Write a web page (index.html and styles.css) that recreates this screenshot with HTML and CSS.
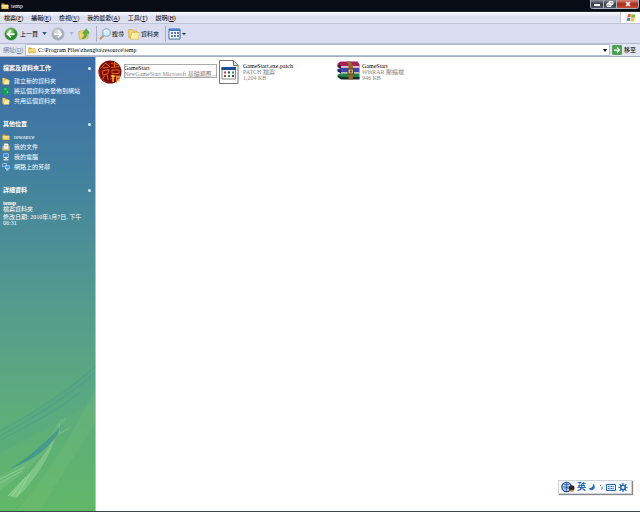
FILE: index.html
```
<!DOCTYPE html>
<html lang="zh-Hant">
<head>
<meta charset="utf-8">
<title>temp</title>
<link rel="stylesheet" href="styles.css">
</head>
<body>
<svg class="defs" aria-hidden="true">
  <defs>
    <linearGradient id="gFolder" x2="0" y2="1"><stop offset="0" stop-color="#fff3a8"/><stop offset="1" stop-color="#e8bd4a"/></linearGradient>
    <radialGradient id="gGreen" cx=".4" cy=".3"><stop offset="0" stop-color="#a5e08d"/><stop offset="1" stop-color="#258a27"/></radialGradient>
    <radialGradient id="gGray" cx=".4" cy=".3"><stop offset="0" stop-color="#e0e3ec"/><stop offset="1" stop-color="#a4a9b8"/></radialGradient>
  </defs>
  <symbol id="folder" viewBox="0 0 16 16"><path d="M1 3h5l2 2h6v9H1z" fill="#d9a93a"/><path d="M1 6h14v8H2z" fill="url(#gFolder)" stroke="#b98a28" stroke-width=".6"/></symbol>
  <symbol id="folders" viewBox="0 0 16 16"><path d="M1 2h5l1 2h5v9H1z" fill="#f5d46b" stroke="#c99a30" stroke-width=".7"/><path d="M5 6h10l-1 9H3z" fill="#fff0a8" stroke="#cfa43a" stroke-width=".7"/></symbol>
  <symbol id="globe" viewBox="0 0 16 16"><circle cx="8" cy="8" r="8" fill="#149a58"/><path d="M4 4l5 0M9 8l3 2-2 3" stroke="#5fe0b8" stroke-width="2" fill="none"/></symbol>
  <symbol id="pc" viewBox="0 0 16 16"><path d="M3 1h10v9H3z" fill="#e5f2ff"/><path d="M4 2h8v6H4z" fill="#3b8ceb"/><path d="M6 10h4v2h3v3H3v-3h3z" fill="#c4dbe6"/></symbol>
  <symbol id="net" viewBox="0 0 16 16"><path d="M1 1h9v7H1z" fill="#e5f2ff"/><path d="M2 2h7v5H2z" fill="#2f7fd8"/><path d="M6 5h9v7H6z" fill="#e5f2ff"/><path d="M7 6h7v5H7z" fill="#3b9ceb"/><path d="M8 12h5v3H8z" fill="#9fd0d8"/></symbol>
</svg>
<div class="window">
  <header class="title">
    <svg class="i8"><use href="#folder"/></svg><h1>temp</h1>
    <div class="winbtns">
      <button aria-label="最小化"><svg viewBox="0 0 12 8"><path d="M3 4h6v2H3z" fill="#fff"/></svg></button>
      <button aria-label="還原"><svg viewBox="0 0 12 8"><path d="M5 1.5h4v3H5zM3 3.5h4v3H3z" fill="#aaa" stroke="#fff"/></svg></button>
      <button class="close" aria-label="關閉"><svg viewBox="0 0 12 8"><path d="M4 2l4 4M8 2L4 6" stroke="#fff" stroke-width="1.5"/></svg></button>
    </div>
  </header>
  <nav class="menu">
    <button>檔案(<u>F</u>)</button><button>編輯(<u>E</u>)</button><button>檢視(<u>V</u>)</button><button>我的最愛(<u>A</u>)</button><button>工具(<u>T</u>)</button><button>說明(<u>H</u>)</button>
    <span class="flag"><svg viewBox="0 0 16 16"><path d="M3 2q3-1 5 0L7 7q-2-1-5 0z" fill="#e4663a"/><path d="M9 2q3 1 6 0l-1 5q-3 1-6 0z" fill="#77b63b"/><path d="M2 8q3-1 5 0l-1 5q-2-1-5 0z" fill="#4683d2"/><path d="M8 8q3 1 6 0l-1 5q-3 1-6 0z" fill="#eec43b"/></svg></span>
  </nav>
  <div class="toolbar">
    <div class="group nav">
      <button><svg class="i14" viewBox="0 0 16 16"><circle cx="8" cy="8" r="7" fill="url(#gGreen)" stroke="#32822f" stroke-width=".6"/><path d="M12 8H5m3-4L4 8l4 4" stroke="#fff" stroke-width="2" fill="none"/></svg>上一頁</button>
      <button class="drop" aria-label="上一頁清單"><svg viewBox="0 0 6 4"><path d="M0 0h6L3 4z" fill="#245c91"/></svg></button>
      <button aria-label="下一頁"><svg class="i14" viewBox="0 0 16 16"><circle cx="8" cy="8" r="7" fill="url(#gGray)" stroke="#a0a4b0" stroke-width=".6"/><path d="M4 8h7M8 4l4 4-4 4" stroke="#fff" stroke-width="2" fill="none"/></svg></button>
      <button class="drop" aria-label="下一頁清單"><svg viewBox="0 0 6 4"><path d="M0 0h6L3 4z" fill="#a9b4ca"/></svg></button>
      <button aria-label="上移"><svg class="i12" viewBox="0 0 16 16"><path d="M1 5l6-2 2 2 5-1-1 10-11 1z" fill="#f3d56c" stroke="#c69c37" stroke-width=".7"/><path d="M5 14q4-2 4-7H6l5-6 4 6h-3q0 7-7 7z" fill="#52b63c" stroke="#2c8528" stroke-width=".6"/></svg></button>
    </div>
    <div class="group tools">
      <button><svg class="i12" viewBox="0 0 16 16"><path d="M6 10l-5 5" stroke="#c59b73" stroke-width="3"/><circle cx="10" cy="6" r="5" fill="#d4efff" stroke="#8aa9cd" stroke-width="1.5"/><path d="M7 5q1-2 4-2" stroke="#fff" fill="none"/></svg>搜尋</button>
      <button><svg class="i12" viewBox="0 0 16 16"><use href="#folders"/></svg>資料夾</button>
    </div>
    <div class="group">
      <button class="views" aria-label="檢視"><svg viewBox="0 0 18 12"><path d="M1 1h11v10H1z" fill="#fff" stroke="#3269b0"/><path d="M1 1h11v2H1z" fill="#3e7fd0"/><path d="M3 5h2M6 5h2M9 5h2M3 8h2M6 8h2M9 8h2" stroke="#2c4d96" stroke-width="1.5"/><path d="M14 5h4l-2 2z" fill="#123"/></svg></button>
    </div>
  </div>
  <form class="address">
    <label for="path">網址(<u>D</u>)</label>
    <div class="field"><svg class="i8"><use href="#folder"/></svg><input id="path" value="C:\Program Files\zhengba\resource\temp"><button type="button" class="arrow" aria-label="開啟清單"><svg viewBox="0 0 4 3"><path d="M0 0h4L2 3z"/></svg></button></div>
    <button type="button" class="go"><svg class="i10" viewBox="0 0 16 16"><path d="M1 1h14v14H1z" fill="#43a747" stroke="#247a2d"/><path d="M3 8h8M8 4l4 4-4 4" fill="none" stroke="#fff" stroke-width="2"/></svg>移至</button>
  </form>
  <main class="content">
    <aside class="side">
      <svg class="rays" viewBox="0 0 96 150" preserveAspectRatio="none" aria-hidden="true">
        <path d="M0 71Q55 42 96 6v32Q60 62 0 92z" fill="#4aa194" opacity=".2"/>
        <path d="M0 70Q55 41 96 6M0 75Q55 46 96 12M0 79Q52 54 80 32" stroke="#3c958f" stroke-width="1" fill="none" opacity=".45"/>
        <path d="M0 115Q42 96 61 58L67 56Q52 94 0 129z" fill="#a5daa0" opacity=".16"/>
        <path d="M10 108Q42 88 64 62Q54 86 28 100z" fill="#2f8797" opacity=".6"/>
        <path d="M8 135Q36 108 56 76Q46 108 17 137z" fill="#b4e8b0" opacity=".35"/>
        <path d="M60 62L60 73L70 67" stroke="#a5daa0" fill="none" opacity=".4"/>
        <path d="M17 150Q62 97 96 28v35Q60 117 40 150z" fill="#8cca83" opacity=".14"/>
        <path d="M8 135L24 118M12 135L26 116M17 135L30 113M0 118L25 106M0 122L22 110" stroke="#c4edbb" stroke-width=".8" opacity=".5"/>
      </svg>
      <section>
        <h2>檔案及資料夾工作</h2>
        <a href="#"><svg class="i8"><use href="#folders"/></svg>建立新的資料夾</a>
        <a href="#"><svg class="i8"><use href="#globe"/></svg>將這個資料夾發佈到網站</a>
        <a href="#"><svg class="i8"><use href="#folders"/></svg>共用這個資料夾</a>
      </section>
      <section>
        <h2>其他位置</h2>
        <a href="#"><svg class="i8"><use href="#folder"/></svg>resource</a>
        <a href="#"><svg class="i8" viewBox="0 0 16 16"><path d="M1 6h14v9H1z" fill="#e9cc6e"/><path d="M4 1h7l2 2v9H3z" fill="#fff" stroke="#b4a66a"/><path d="M5 5h5M5 8h5" stroke="#89a"/></svg>我的文件</a>
        <a href="#"><svg class="i8"><use href="#pc"/></svg>我的電腦</a>
        <a href="#"><svg class="i8"><use href="#net"/></svg>網路上的芳鄰</a>
      </section>
      <section class="details">
        <h2>詳細資料</h2>
        <p><b>temp</b><br>檔案資料夾</p>
        <p>修改日期: 2010年1月7日, 下午 06:31</p>
      </section>
    </aside>
    <div class="files">
      <article class="file first">
        <svg class="i24" viewBox="0 0 48 48"><circle cx="24" cy="24" r="23" fill="#780d08"/><path d="M5 17L15 6l9 8M10 16l11-2M8 22l14-3-3 9-9 2zM13 31l-4 8M18 29l2 10M26 7l15 2M33 4v11M26 15l17-2M28 20h14v7H28zM25 32h19M30 29v15M25 38l9-2M37 31v14M36 36h8M36 41h7" fill="none" stroke="#e8601a" stroke-width="2"/><path d="M26 32h8M37 34h7M30 30v14M37 40h7" stroke="#ffe35b" stroke-width="2"/><path d="M2 20q-1 18 15 25" fill="none" stroke="#c72a12" stroke-width="2"/></svg>
        <div class="info"><h3>GameStart</h3><p>NewGameStart Microsoft 基礎類應...</p></div>
      </article>
      <article class="file">
        <svg class="i24" viewBox="-2 0 48 48"><path d="M3 1h28l9 9v37H3z" fill="#fff" stroke="#777" stroke-width="2"/><path d="M31 1v10h9" fill="#ddd" stroke="#777" stroke-width="2"/><path d="M8 15h27v23H8z" fill="#fff" stroke="#888" stroke-width="2"/><path d="M7 14h29v6H7z" fill="#244a9c"/><path d="M12 25h4M12 32h4" stroke="#b24a33" stroke-width="4"/><path d="M20 25h4M28 32h4" stroke="#37456d" stroke-width="4"/><path d="M28 25h4M20 32h4" stroke="#2c9148" stroke-width="4"/></svg>
        <div class="info"><h3>GameStart.exe.patch</h3><p>PATCH 檔案</p><p>1,204 KB</p></div>
      </article>
      <article class="file">
        <svg class="i24" viewBox="-2 0 48 48"><path d="M1 7l6-4h34l4 6v6H8z" fill="#a51f58"/><path d="M1 8l7 3v7l-7-4z" fill="#510e32"/><path d="M8 12h36v3H8z" fill="#ccc"/><path d="M1 18l7-2h37v10H8z" fill="#3c45ab"/><path d="M1 18l7 3v6l-7-4z" fill="#1a1f60"/><path d="M8 24h36v3H8z" fill="#bbb"/><path d="M1 29l7-2h37v10H8z" fill="#22834a"/><path d="M1 30l7 4h37v5H8l-7-5z" fill="#142f2c"/><path d="M19 3h9l4 8v28h-9V11z" fill="#9a642f"/><path d="M22 18h11v10H22z" fill="#d6b45d" stroke="#5b3b20" stroke-width="2"/><path d="M26 21h4v4h-4z" fill="#655"/></svg>
        <div class="info"><h3>GameStart</h3><p>WinRAR 壓縮檔</p><p>946 KB</p></div>
      </article>
    </div>
  </main>
</div>
<div class="ime">
  <svg class="ball" viewBox="0 0 30 24"><circle cx="12" cy="12" r="10" fill="#c7def2" stroke="#234f92" stroke-width="3"/><path d="M6 7h12M5 12h14M12 4v16M7 17l5-5 5 5" stroke="#285ca5" stroke-width="2" fill="none"/><circle cx="23" cy="14" r="6" fill="#32221c"/><path d="M20 18h7v4h-7z" fill="#ce8140"/></svg>
  <b>英</b>
  <svg viewBox="0 0 16 16"><path d="M10 1q1 9-9 10 6 6 11 1 4-5-2-11z" fill="#2869bd"/></svg>
  <svg class="mark" viewBox="0 0 10 16"><path d="M3 4l2 2M7 8q2 3-2 5" stroke="#2869bd" stroke-width="2" fill="none"/></svg>
  <svg class="wide" viewBox="0 0 20 16"><path d="M1 2h18v12H1z" fill="#dcecff" stroke="#2869bd" stroke-width="2"/><path d="M4 6h12M4 10h12" stroke="#2869bd" stroke-width="2" stroke-dasharray="2 1"/></svg>
  <svg class="wide" viewBox="0 0 16 16"><circle cx="8" cy="8" r="4" fill="none" stroke="#2869bd" stroke-width="3"/><path d="M8 0v4M8 12v4M0 8h4M12 8h4M2 2l3 3M11 11l3 3M14 2l-3 3M2 14l3-3" stroke="#2869bd" stroke-width="2"/></svg>
</div>
</body>
</html>
```

FILE: styles.css
```
* { box-sizing: border-box; }
body { margin: 0; font: 6px/8px "Liberation Serif", "Noto Sans CJK TC", serif; color: #000; background: #fff; }
svg { display: block; flex: none; }
h1, h2, h3, p { margin: 0; font-size: inherit; font-weight: normal; }
button, input { font: inherit; color: inherit; border: 0; padding: 0; margin: 0; background: none; }
button { display: flex; align-items: center; white-space: nowrap; }
a { color: inherit; text-decoration: none; }
.defs { position: absolute; width: 0; height: 0; }
.i8 { width: 8px; height: 8px; }
.i10 { width: 10px; height: 10px; }
.i12 { width: 12px; height: 12px; }
.i14 { width: 14px; height: 14px; }
.i24 { width: 24px; height: 24px; }
.window { min-height: 100vh; display: flex; flex-direction: column; border-bottom: 1px solid #3c4048; }
.title { display: flex; align-items: center; gap: 2px; height: 12px; padding-left: 1px; background: #080c14; color: #fff; border-bottom: 1px solid #20242d; }
.winbtns { display: flex; align-self: flex-start; margin-left: auto; margin-right: 1px; border: 1px solid #aab0bc; border-top: 0; border-radius: 0 0 3px 3px; overflow: hidden; }
.winbtns button { width: 13px; height: 8px; background: linear-gradient(#8b909b, #343a47 50%, #555c6b); border-right: 1px solid #aab0bc; }
.winbtns svg { width: 12px; height: 8px; }
.winbtns .close { width: 21px; justify-content: center; background: linear-gradient(#d48a7d, #ab281a 50%, #c64b38); border: 0; }
.menu { display: flex; align-items: center; gap: 8px; height: 12px; padding-left: 4px; background: linear-gradient(#fafbff, #d8dced 50%, #e2e5f3); border-bottom: 1px solid #bec4d6; }
.flag { margin-left: auto; width: 20px; height: 11px; background: #fff; border-left: 1px solid #c5c8d4; display: flex; justify-content: center; align-items: center; }
.flag svg { width: 10px; height: 10px; }
.toolbar { display: flex; align-items: center; height: 20px; padding-left: 4px; background: #d9ddef; border-bottom: 1px solid #b6bccf; }
.toolbar button { gap: 2px; }
.group { display: flex; align-items: center; height: 16px; }
.group + .group { border-left: 1px solid #a9afc4; padding-left: 2px; }
.nav { gap: 4px; padding-right: 6px; }
.tools { gap: 4px; padding-right: 6px; }
.tools button { gap: 1px; }
.drop svg { width: 5px; height: 3px; }
.views svg { width: 18px; height: 12px; }
.address { display: flex; align-items: stretch; height: 13px; background: #e2e5f2; border-bottom: 1px solid #a9afbf; }
.address label { width: 25px; padding: 2px 0 0 3px; color: #777c88; white-space: nowrap; }
.field { flex: 1; display: flex; align-items: center; gap: 2px; padding: 0 2px; background: #fff; border: 1px solid #b5bfd3; }
.field input { flex: 1; min-width: 0; height: 8px; outline: 0; }
.arrow svg { width: 4px; height: 3px; }
.go { width: 30px; gap: 2px; padding-left: 2px; }
.content { flex: 1; display: flex; }
.side { position: relative; width: 96px; flex: none; color: #fff; padding: 7px 4px 0 2px; border-right: 1px solid #a8c8c0; background: linear-gradient(#3b6ca6, #42809f 25%, #529a90 52%, #5dac7c 77%, #61b768); }
.rays { position: absolute; left: 0; bottom: 0; width: 100%; height: 150px; }
.side section { position: relative; margin-bottom: 14px; }
.side h2 { display: flex; justify-content: space-between; align-items: center; font-weight: bold; padding-left: 1px; margin-bottom: 4px; }
.side h2::after { content: ""; width: 3px; height: 3px; border-radius: 50%; background: #d9ecff; }
.side a { display: flex; align-items: center; gap: 4px; height: 10px; white-space: nowrap; }
.side .details h2 { margin-bottom: 6px; }
.details p { line-height: 6px; padding-left: 1px; margin-bottom: 2px; }
.files { flex: 1; padding: 3px 0 0 2px; display: grid; grid-template-columns: repeat(auto-fill, 119px); align-content: start; }
.file { display: flex; gap: 2px; }
.info { padding-top: 3px; line-height: 6px; white-space: nowrap; }
.info p { color: #858585; }
.first .info { width: 93px; height: 14px; margin-top: 4px; padding: 1px 0 0; outline: 1px solid #aaa; outline-offset: -1px; }
.ime { position: absolute; right: 8px; bottom: 18px; display: flex; align-items: center; gap: 2px; width: 74px; height: 14px; padding-left: 2px; border: 1px solid #cfd4dc; background: #f8fbff; box-shadow: 1px 1px 1px #888; color: #2869bd; }
.ime svg { width: 8px; height: 8px; }
.ime b { font-size: 9px; line-height: 12px; }
.ime .ball { width: 14px; height: 12px; }
.ime .mark { width: 6px; }
.ime .wide { width: 10px; height: 9px; }
```
